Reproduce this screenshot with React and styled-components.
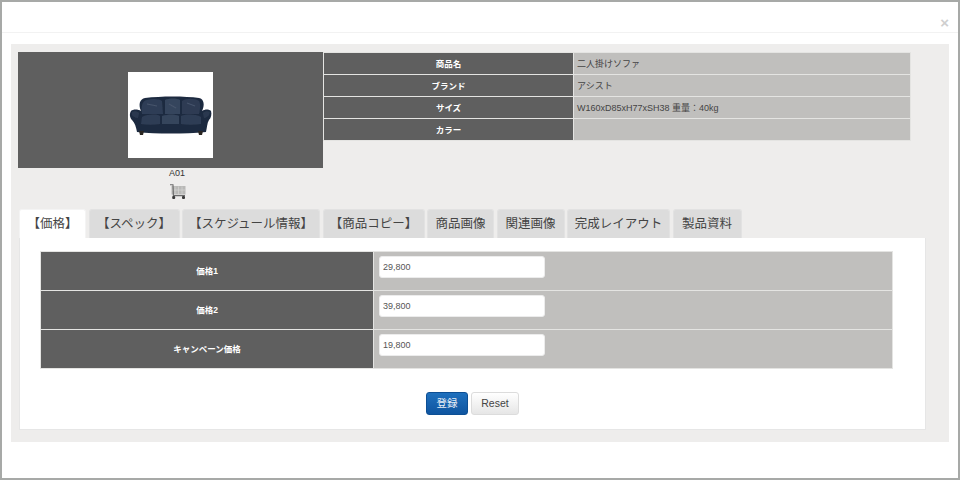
import React from 'react'
import styled, { createGlobalStyle } from 'styled-components'

const GlobalStyle = createGlobalStyle`
  html, body {
    margin: 0;
    padding: 0;
    background: #fff;
  }
  body {
    font-family: 'Liberation Sans', 'Noto Sans CJK JP', sans-serif;
  }
`

const Modal = styled.div`
  width: 960px;
  height: 480px;
  box-sizing: border-box;
  border: 2px solid #a7a9a7;
  background: #fff;
  overflow: hidden;
`

const Header = styled.div`
  height: 31px;
  box-sizing: border-box;
  border-bottom: 1px solid #f2f2f2;
  display: flex;
  justify-content: flex-end;
  align-items: flex-start;
  padding: 13px 9px 0 0;
`

const Close = styled.span`
  font-size: 15px;
  line-height: 15px;
  font-weight: 700;
  color: #cfcfcf;
`

const Body = styled.div`
  margin: 11px 9px 0 9px;
  height: 398px;
  box-sizing: border-box;
  padding: 8px 23px 0 7px;
  background: #eeedec;
`

const TopRow = styled.div`
  display: flex;
  align-items: flex-start;
  height: 157px;
`

const ProductColumn = styled.div`
  width: 305px;
  display: flex;
  flex-direction: column;
  align-items: center;
`

const PhotoPanel = styled.div`
  width: 100%;
  height: 116px;
  box-sizing: border-box;
  background: #5f5f5f;
  display: flex;
  justify-content: center;
  align-items: center;
  padding-top: 10px;
`

const Photo = styled.div`
  width: 85px;
  height: 86px;
  background: #fff;
  display: flex;
  align-items: center;
  justify-content: center;
  padding-top: 4px;
  box-sizing: border-box;
`

const Code = styled.div`
  margin-left: 13px;
  font-size: 9px;
  line-height: 11px;
  height: 11px;
  display: flex;
  align-items: center;
  color: #333;
`

const CartButton = styled.div`
  margin: 5px 0 0 15px;
  height: 16px;
  display: flex;
`

const Grid = styled.table`
  border-collapse: collapse;
  table-layout: fixed;
  width: ${props => props.$width}px;
`

const Label = styled.th`
  box-sizing: border-box;
  width: ${props => props.$width}px;
  height: ${props => props.$height}px;
  padding: 0 0 ${props => props.$lift}px;
  background: #5f5f5f;
  border: 1px solid #e4e4e2;
  color: #fff;
  font-size: 8.5px;
  font-weight: 700;
  text-align: center;
`

const Value = styled.td`
  box-sizing: border-box;
  height: ${props => props.$height}px;
  padding: 0 0 ${props => props.$lift}px ${props => props.$pad}px;
  background: #c0bfbd;
  border: 1px solid #e4e4e2;
  color: #444;
  font-size: 9px;
`

const Tabs = styled.div`
  display: flex;
  padding-left: 1px;
  gap: 2.5px;
  height: 29px;
`

const Tab = styled.div`
  height: 29px;
  width: ${props => props.$width}px;
  box-sizing: border-box;
  display: flex;
  align-items: center;
  justify-content: center;
  font-size: 12.5px;
  color: #444;
  border-radius: 3px 3px 0 0;
  background: ${props => (props.$active ? '#fff' : '#dcdcdc')};
  border: 1px solid ${props => (props.$active ? '#f4f4f4' : '#e2e2e2')};
  border-bottom: none;
  padding-bottom: 3px;
`

const TabPanel = styled.div`
  margin-left: 1px;
  height: 192px;
  box-sizing: border-box;
  background: #fff;
  border: 1px solid #e6e6e6;
  border-top: none;
  padding: 13px 33px 0 20px;
`

const PriceInput = styled.input`
  display: block;
  width: 166px;
  height: 22px;
  box-sizing: border-box;
  padding: 0 3px;
  border: 1px solid #ececec;
  border-radius: 3px;
  background: #fff;
  color: #555;
  font-family: inherit;
  font-size: 9px;
  outline: none;
`

const Actions = styled.div`
  margin-top: 23px;
  margin-left: 13px;
  display: flex;
  justify-content: center;
  gap: 3px;
`

const Button = styled.button`
  height: 23px;
  width: ${props => props.$width}px;
  padding: 0 0 2px;
  border-radius: 3px;
  font-family: inherit;
  font-size: 10.5px;
  border: 1px solid ${props => (props.$primary ? '#0d4f94' : '#dcdcdc')};
  color: ${props => (props.$primary ? '#e8eef6' : '#444')};
  background: ${props =>
    props.$primary ? 'linear-gradient(#1f70bd, #0f55a0)' : 'linear-gradient(#fff, #e6e6e6)'};
`

function Sofa() {
  return (
    <svg width="83" height="42" viewBox="0 0 83 42">
      <defs>
        <filter id="soft" x="-5%" y="-5%" width="110%" height="110%">
          <feGaussianBlur stdDeviation="0.6" />
        </filter>
      </defs>
      <g filter="url(#soft)">
        {/* frame */}
        <path d="M12 15 C9 8 11 3 16 2 C32 0 56 0 70 2 C75 3 76 9 73 15 C76 13 80 13 82 15 C83 18 82 22 80 24 C78 27 78 32 77 36 C55 38 28 38 8 36 C7 31 6 27 3 24 C1 22 0 18 2 15 C4 13 9 13 12 15 Z" fill="#1e2b40" />
        {/* back cushions */}
        <path d="M13 18 C12 10 13 5 18 4 C24 2 31 3 33 5 L34 18 Z" fill="#2f3e56" />
        <path d="M36 4 C40 2 48 2 51 4 L51 18 L36 18 Z" fill="#36455d" />
        <path d="M53 5 C57 2 66 2 70 5 C72 8 71 14 70 18 L53 18 Z" fill="#2d3b53" />
        <path d="M18 8 L28 10 M40 8 L47 12 M58 7 L66 10" stroke="#46546b" strokeWidth="1.2" />
        {/* seat cushions */}
        <path d="M13 21 C19 18 28 18 31 20 L31 28 C25 29 18 29 12 28 Z" fill="#2f3d55" />
        <path d="M33 20 C39 18 46 18 50 20 L50 28 L33 28 Z" fill="#35445c" />
        <path d="M52 20 C58 18 66 18 72 21 L72 28 C65 29 58 29 52 28 Z" fill="#2f3d55" />
        {/* arm rolls */}
        <path d="M3 16 C5 15 8 15 10 17 L9 22 C6 22 4 20 3 19 Z" fill="#2b394f" />
        <path d="M74 17 C76 15 79 15 81 16 L80 19 C79 20 77 22 75 22 Z" fill="#2b394f" />
        {/* feet */}
        <path d="M10 35 H15 L14 39 H11 Z M69 35 H74 L73 39 H70 Z" fill="#2a2622" />
      </g>
    </svg>
  )
}

function Cart() {
  return (
    <svg width="16" height="15" viewBox="0 0 16 15">
      <rect x="1.5" y="2" width="14" height="8.5" fill="#b9b9b7" />
      <path d="M5 2.5 V10 M8.5 2.5 V10 M12 2.5 V10 M2 6 H15" stroke="#d6d6d4" strokeWidth="0.7" />
      <path d="M0 0.8 H3 L3.4 11.6 H15" fill="none" stroke="#6a6a6a" strokeWidth="1.1" />
      <rect x="2.2" y="12" width="3" height="3" rx="1" fill="#3a3a3a" />
      <rect x="12" y="12" width="3" height="3" rx="1" fill="#3a3a3a" />
    </svg>
  )
}

const info = [
  ['商品名', '二人掛けソファ'],
  ['ブランド', 'アシスト'],
  ['サイズ', 'W160xD85xH77xSH38 重量：40kg'],
  ['カラー', ''],
]

const tabs = [
  ['【価格】', 67],
  ['【スペック】', 91],
  ['【スケジュール情報】', 138],
  ['【商品コピー】', 102],
  ['商品画像', 67],
  ['関連画像', 68],
  ['完成レイアウト', 103],
  ['製品資料', 69],
]

const prices = [
  ['価格1', '29,800'],
  ['価格2', '39,800'],
  ['キャンペーン価格', '19,800'],
]

export default function App() {
  return (
    <Modal>
      <GlobalStyle />
      <Header>
        <Close>×</Close>
      </Header>
      <Body>
        <TopRow>
          <ProductColumn>
            <PhotoPanel>
              <Photo>
                <Sofa />
              </Photo>
            </PhotoPanel>
            <Code>A01</Code>
            <CartButton>
              <Cart />
            </CartButton>
          </ProductColumn>
          <Grid $width={588}>
            <tbody>
              {info.map(([name, value]) => (
                <tr key={name}>
                  <Label $width={250} $height={22} $lift={1}>{name}</Label>
                  <Value $height={22} $lift={1} $pad={3}>{value}</Value>
                </tr>
              ))}
            </tbody>
          </Grid>
        </TopRow>
        <Tabs>
          {tabs.map(([name, width], i) => (
            <Tab key={name} $width={width} $active={i === 0}>{name}</Tab>
          ))}
        </Tabs>
        <TabPanel>
          <Grid $width={853}>
            <tbody>
              {prices.map(([name, value]) => (
                <tr key={name}>
                  <Label $width={333} $height={39} $lift={3}>{name}</Label>
                  <Value $height={39} $lift={8} $pad={5}>
                    <PriceInput defaultValue={value} />
                  </Value>
                </tr>
              ))}
            </tbody>
          </Grid>
          <Actions>
            <Button $primary $width={42}>登録</Button>
            <Button $width={48}>Reset</Button>
          </Actions>
        </TabPanel>
      </Body>
    </Modal>
  )
}
